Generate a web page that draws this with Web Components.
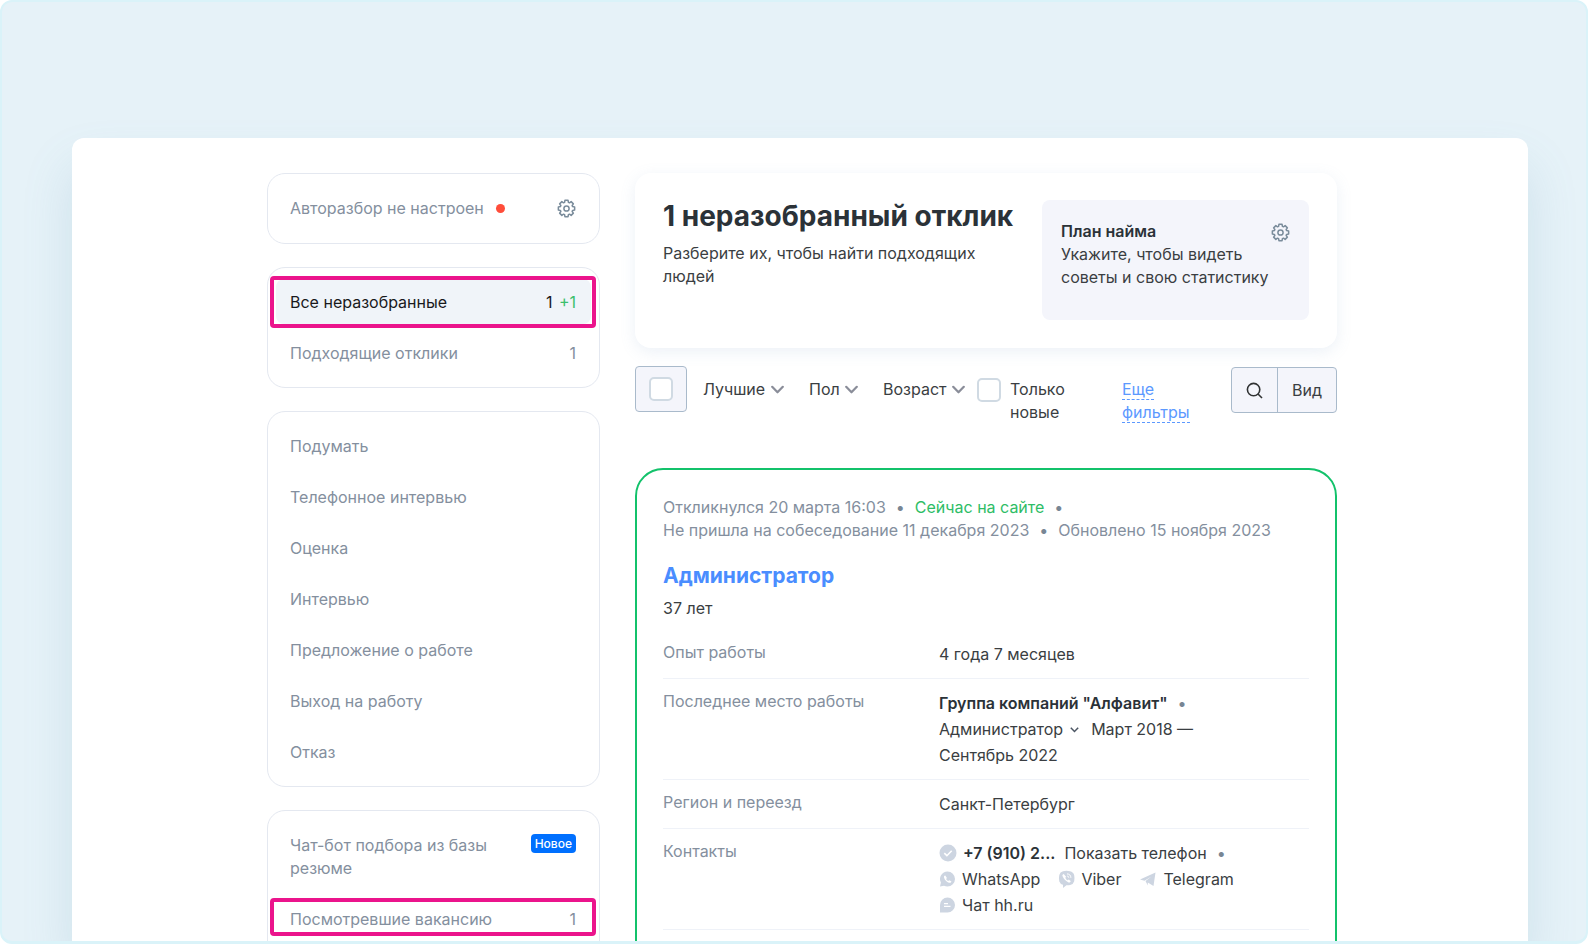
<!DOCTYPE html>
<html lang="ru">
<head>
<meta charset="utf-8">
<meta name="viewport" content="width=device-width, initial-scale=1">
<title>Отклики</title>
<style>
  html { background: #fff; }
  body { margin: 0; font-family: Inter, "Liberation Sans", sans-serif; font-size: 16px; line-height: 23px; font-optical-sizing: none; color: #3a3e42; }
</style>
</head>
<body>
<app-frame>
  <side-menu slot="side"></side-menu>
  <plan-header slot="main"></plan-header>
  <filter-bar slot="main"></filter-bar>
  <resume-card slot="main"></resume-card>
</app-frame>

<script>
const define = (name, html, setup) => customElements.define(name, class extends HTMLElement {
  constructor() {
    super();
    const t = document.createElement('template');
    t.innerHTML = html;
    this.attachShadow({ mode: 'open' }).append(t.content.cloneNode(true));
  }
  connectedCallback() { setup?.(this); }
});

/* Settings gear: eight rounded teeth round a small ring */
const gearPath = (() => {
  const n = 8, pts = [];
  for (let i = 0; i < n; i++) {
    const a = i * 2 * Math.PI / n - Math.PI / 2;
    [[-.30, 6.4], [-.19, 8.3], [.19, 8.3], [.30, 6.4]].forEach(([d, r]) =>
      pts.push((9.5 + r * Math.cos(a + d)).toFixed(2) + ' ' + (9.5 + r * Math.sin(a + d)).toFixed(2)));
  }
  return 'M' + pts.join('L') + 'Z';
})();

define('gear-icon', `
  <style>:host{display:block;width:19px;height:19px;color:#7a8c9b}svg{display:block}</style>
  <svg width="19" height="19" viewBox="0 0 19 19" fill="none" stroke="currentColor" stroke-width="1.5" stroke-linejoin="round" aria-hidden="true">
    <path d="${gearPath}"/><circle cx="9.5" cy="9.5" r="2.6"/>
  </svg>`);

define('dot-sep', `
  <style>:host{display:inline-block;width:29px;text-align:center;color:#788694}</style>•`);

define('app-frame', `
  <style>
    :host{display:flex;box-sizing:border-box;height:100vh;overflow:hidden;padding:136px 58px 0 70px;
      background:#e6f2f8;border:2px solid #daf3f9;border-bottom-width:3px;border-radius:12px}
    .window{flex:1;min-width:0;display:grid;grid-template-columns:333px minmax(0,1fr);column-gap:35px;
      align-items:start;padding:35px 191px 0 195px;background:#fff;border-radius:12px 12px 0 0;
      box-shadow:0 30px 50px rgba(90,150,180,.18)}
  </style>
  <div class="window"><aside><slot name="side"></slot></aside><main><slot name="main"></slot></main></div>`);

define('menu-card', `
  <style>
    :host{display:block;box-sizing:border-box;padding:8px 8px 9px;border:1px solid #e4e8f0;border-radius:18px;background:#fff}
    nav{display:flex;flex-direction:column}
  </style>
  <nav><slot></slot></nav>`);

define('menu-item', `
  <style>
    :host{display:block;position:relative;margin:3px 0}
    a{display:flex;justify-content:space-between;align-items:flex-start;gap:24px;padding:12px 15px 10px 14px;border-radius:8px;
      color:#848f9e;text-decoration:none}
    :host([selected]) a{background:#f0f4f9;color:#19191c}
    :host([marked])::after{content:"";position:absolute;inset:-3px -5px -4px -6px;border:4px solid #eb148c;border-radius:4px;pointer-events:none}
    :host([marked="tight"])::after{inset:2px -5px 5px -6px}
    .count{white-space:nowrap}
  </style>
  <a href="#"><span><slot></slot></span><span class="count"><slot name="count"></slot></span></a>`);

define('side-menu', `
  <style>
    :host{display:flex;flex-direction:column;gap:23px}
    .auto{box-sizing:border-box;display:flex;align-items:center;min-height:71px;padding:0 23px 0 22px;
      border:1px solid #e4e8f0;border-radius:18px;color:#848f9e}
    .alert{width:9px;height:9px;margin-left:12px;border-radius:50%;background:#ff4d3a}
    button{margin:0 0 0 auto;padding:0;border:0;background:none;cursor:pointer}
    .plus{margin-left:2px;color:#3cbf6c}
    .new{display:block;padding:0 4px;border-radius:4px;background:#0070ff;color:#fff;font-size:12px;line-height:19px;font-weight:500}
    .open{padding-bottom:48px}
  </style>
  <section class="auto"><span>Авторазбор не настроен</span><span class="alert"></span>
    <button aria-label="Настройки авторазбора"><gear-icon></gear-icon></button></section>
  <menu-card>
    <menu-item selected marked>Все неразобранные<span slot="count">1 <span class="plus">+1</span></span></menu-item>
    <menu-item>Подходящие отклики<span slot="count">1</span></menu-item>
  </menu-card>
  <menu-card>
    <menu-item>Подумать</menu-item>
    <menu-item>Телефонное интервью</menu-item>
    <menu-item>Оценка</menu-item>
    <menu-item>Интервью</menu-item>
    <menu-item>Предложение о работе</menu-item>
    <menu-item>Выход на работу</menu-item>
    <menu-item>Отказ</menu-item>
  </menu-card>
  <menu-card class="open">
    <menu-item>Чат-бот подбора из базы резюме<span slot="count" class="new">Новое</span></menu-item>
    <menu-item marked="tight">Посмотревшие вакансию<span slot="count">1</span></menu-item>
  </menu-card>`);

define('plan-header', `
  <style>
    :host{display:flex;justify-content:space-between;gap:20px;padding:27px 28px 28px;border-radius:16px;background:#fff;
      box-shadow:0 4px 16px rgba(112,146,190,.13)}
    .intro{flex:1;min-width:0}
    h1{margin:0 0 10px;font-size:28px;line-height:32px;font-weight:700;color:#2b3238;white-space:nowrap}
    p{margin:0}
    .intro p{max-width:340px}
    .plan{flex:0 0 267px;box-sizing:border-box;display:flex;justify-content:space-between;align-items:flex-start;
      min-height:120px;padding:20px 19px;border-radius:8px;background:#f4f5fb}
    .plan h2{margin:0;font-size:inherit;line-height:inherit;font-weight:600;color:#2b3238}
    .text{width:0;flex:1}
    .text p{white-space:nowrap}
    button{margin:3px 0 0;padding:0;border:0;background:none}
  </style>
  <div class="intro"><h1>1 неразобранный отклик</h1><p>Разберите их, чтобы найти подходящих людей</p></div>
  <div class="plan"><div class="text"><h2>План найма</h2><p>Укажите, чтобы видеть<br>советы и свою статистику</p></div>
    <button aria-label="Настроить план найма"><gear-icon></gear-icon></button></div>`);

define('drop-filter', `
  <style>
    :host{display:block}
    label{display:grid;align-items:center}
    select{grid-area:1/1;appearance:none;margin:0;padding:0 18px 0 0;border:0;background:none;font:inherit;color:inherit}
    svg{grid-area:1/1;justify-self:end;pointer-events:none}
  </style>
  <label><select></select>
    <svg width="13" height="9" viewBox="0 0 13 9" fill="none" stroke="#8a8d99" stroke-width="2.2" stroke-linecap="round" stroke-linejoin="round" aria-hidden="true"><path d="M1.2 1.8 6.5 7.3l5.3-5.500"/></svg>
  </label>`, host => {
  const select = host.shadowRoot.querySelector('select');
  select.replaceChildren(new Option(host.getAttribute('label')));
  select.setAttribute('aria-label', host.getAttribute('label'));
});

define('filter-bar', `
  <style>
    :host{display:flex;align-items:flex-start;margin-top:18px}
    input{appearance:none;flex:none;box-sizing:border-box;width:24px;height:24px;margin:0;border:2px solid #d0dae3;border-radius:5px;background:#fff}
    .all{box-sizing:border-box;display:flex;align-items:center;justify-content:center;width:52px;height:46px;
      border:1px solid #a9bacb;border-radius:4px;background:#f4f5fb}
    .drops{display:flex;gap:25px;margin:12px 12px 0 16px}
    .fresh{display:flex;gap:9px;width:145px;padding-top:12px}
    .fresh span{padding-right:24px}
    .more{flex:1;min-width:0;padding:12px 20px 0 0}
    .more a{color:#5c99ff;text-decoration:none;border-bottom:1px dashed #5c99ff}
    .view{display:flex;margin-top:1px;border:1px solid #a9bacb;border-radius:4px;background:#f4f5fb;overflow:hidden}
    button{display:flex;align-items:center;justify-content:center;height:44px;margin:0;padding:0 14px;border:0;background:none;font:inherit;color:inherit}
    button + button{border-left:1px solid #a9bacb}
  </style>
  <label class="all"><input type="checkbox" aria-label="Выбрать все"></label>
  <div class="drops">
    <drop-filter label="Лучшие"></drop-filter>
    <drop-filter label="Пол"></drop-filter>
    <drop-filter label="Возраст"></drop-filter>
  </div>
  <label class="fresh"><input type="checkbox"><span>Только новые</span></label>
  <div class="more"><a href="#">Еще фильтры</a></div>
  <div class="view">
    <button aria-label="Поиск"><svg width="17" height="17" viewBox="0 0 17 17" fill="none" stroke="#303233" stroke-width="1.6" aria-hidden="true"><circle cx="7.6" cy="7.6" r="6.2"/><path d="m12 12 4 4"/></svg></button>
    <button>Вид</button>
  </div>`);

define('info-row', `
  <style>
    :host{display:grid;grid-template-columns:276px minmax(0,1fr);padding:11px 0;border-bottom:1px solid #eff2f8}
    .label{color:#848f9e}
    .value{line-height:26px;max-width:320px}
  </style>
  <div class="label"><slot name="label"></slot></div><div class="value"><slot></slot></div>`);

define('resume-card', `
  <style>
    :host{display:block;margin-top:44px;padding:26px 26px 40px;border:2px solid #13c26b;border-radius:28px;background:#fff}
    .meta{color:#848f9e}
    .nw{white-space:nowrap}
    .online{color:#2ebd66}
    h2{margin:20px 0 7px;font-size:21px;line-height:28px;font-weight:700}
    h2 a{color:#4a8dff;text-decoration:none}
    .rows{margin-top:10px}
    b{font-weight:600;color:#2b3238}
    .contacts{display:flex;flex-wrap:wrap}
    .c{display:flex;align-items:center;gap:6px;margin-right:18px;white-space:nowrap}
    .c a{color:inherit;text-decoration:none}
    .phone{margin-right:9px}
    button{margin:0;padding:0;border:0;background:none;font:inherit;color:inherit}
    svg{display:block}
    .job{display:flex;align-items:center}
    .chev{margin:2px 12px 0 7px}
  </style>
  <div class="meta"><span class="nw">Откликнулся 20 марта 16:03<dot-sep></dot-sep></span><span class="nw"><span class="online">Сейчас на сайте</span><dot-sep></dot-sep></span>
    <span class="nw">Не пришла на собеседование 11 декабря 2023<dot-sep></dot-sep></span><span class="nw">Обновлено 15 ноября 2023</span></div>
  <h2><a href="#">Администратор</a></h2>
  <div>37 лет</div>
  <div class="rows">
    <info-row><span slot="label">Опыт работы</span>4 года 7 месяцев</info-row>
    <info-row><span slot="label">Последнее место работы</span><div class="nw"><b>Группа компаний "Алфавит"</b><dot-sep></dot-sep></div><div class="job"><span>Администратор</span><svg class="chev" width="9" height="6" viewBox="0 0 9 6" fill="none" stroke="#4b5563" stroke-width="1.5" aria-hidden="true"><path d="m.8.8 3.700 3.700L8.200.8"/></svg><span>Март 2018 —</span></div><div>Сентябрь 2022</div></info-row>
    <info-row><span slot="label">Регион и переезд</span>Санкт-Петербург</info-row>
    <info-row><span slot="label">Контакты</span><div class="contacts">
      <span class="c phone"><svg width="18" height="18" viewBox="0 0 18 18" aria-hidden="true"><circle cx="9" cy="9" r="8.5" fill="#cdd5e1"/><path d="m5.3 9.2 2.6 2.5 4.8-5" fill="none" stroke="#fff" stroke-width="1.6"/></svg><b>+7 (910) 2...</b></span><span class="nw"><button>Показать телефон</button><dot-sep></dot-sep></span>
      <span class="c"><svg width="17" height="18" viewBox="0 0 17 18" aria-hidden="true"><path d="M8.5 1.500a7.500 7.500 0 1 1 0 15q-2 0-3.500-.800L1 16.500l.9-3.900A7.500 7.500 0 0 1 8.500 1.500Z" fill="#cdd5e1"/><path d="M6.300 5.500c-1.300 0-1.500 1-1.200 2.300.7 2.300 2.500 4.200 4.800 4.900 1.400.3 2.500-.2 2.400-1.500l-2.100-1-1 .9c-1-.5-1.700-1.200-2.100-2.200l.8-1Z" fill="#fff"/></svg><a href="#">WhatsApp</a></span>
      <span class="c"><svg width="17" height="18" viewBox="0 0 17 18" aria-hidden="true"><path d="M5 1.200Q8.500.4 12 1.200q3.500.8 4.200 4 .6 3.300 0 6-.8 3-4 3.700-2 .4-3.800.3L5 18v-3.300q-2.800-.6-3.700-3.200-.8-3 0-6.500Q2 2 5 1.200Z" fill="#cdd5e1"/><path d="M5.700 3.900c-1.300.4-1.600 1.400-1 2.700 1.100 2.500 2.900 4.500 5.400 5.600 1.400.6 2.400 0 2.600-1.300l-2-1.400-1 .8c-1.200-.5-2-1.400-2.400-2.600l.8-1Z" fill="#fff"/><path d="M9 3.900c2.500.1 3.800 1.500 3.900 3.900M9.200 6c1 .1 1.500.700 1.600 1.700" fill="none" stroke="#fff"/></svg><a href="#">Viber</a></span>
      <span class="c"><svg width="18" height="18" viewBox="0 0 18 18" aria-hidden="true"><path d="M1 9.500 16.500 2.500 14.500 16 8.800 12.500v3L6.500 11l6-4.600L5.500 10.700Z" fill="#cdd5e1"/></svg><a href="#">Telegram</a></span>
      <span class="c"><svg width="17" height="18" viewBox="0 0 17 18" aria-hidden="true"><path d="M8.500 1.500a7.500 7.500 0 1 1 0 15H1V9a7.500 7.500 0 0 1 7.500-7.500Z" fill="#cdd5e1"/><path d="M5 7.700h4M5 10.300h6.500" stroke="#fff" stroke-width="1.300"/></svg><a href="#">Чат hh.ru</a></span>
    </div></info-row>
  </div>`);
</script>
</body>
</html>
